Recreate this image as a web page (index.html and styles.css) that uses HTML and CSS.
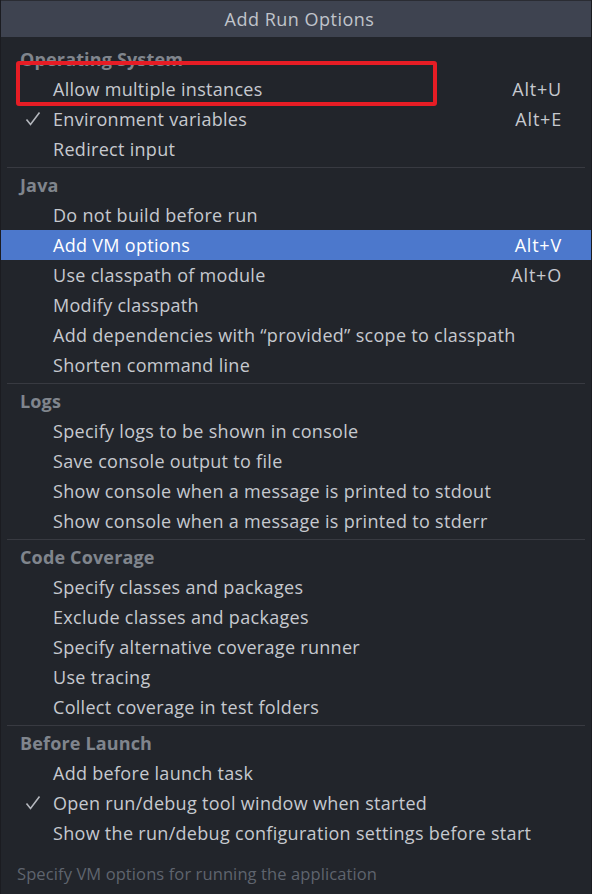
FILE: index.html
```html
<!DOCTYPE html>
<html>
<head>
<meta charset="utf-8">
<link rel="stylesheet" href="styles.css">
</head>
<body>
<div class="popup">
  <div class="title">Add Run Options</div>
  <div class="list">
    <div class="sec-head">Operating System</div>
    <div class="item"><span class="check"></span><span class="label">Allow multiple instances</span><span class="key">Alt+U</span></div>
    <div class="item"><span class="check"><svg viewBox="0 0 16 16" width="16" height="16"><polyline points="1.5,8.5 5.5,13.5 14.5,1.5" fill="none" stroke="#b4b7bd" stroke-width="1.6"/></svg></span><span class="label">Environment variables</span><span class="key">Alt+E</span></div>
    <div class="item"><span class="check"></span><span class="label">Redirect input</span></div>
    <div class="sep"></div>
    <div class="sec-head">Java</div>
    <div class="item"><span class="check"></span><span class="label">Do not build before run</span></div>
    <div class="item selected"><span class="check"></span><span class="label">Add VM options</span><span class="key">Alt+V</span></div>
    <div class="item"><span class="check"></span><span class="label">Use classpath of module</span><span class="key">Alt+O</span></div>
    <div class="item"><span class="check"></span><span class="label">Modify classpath</span></div>
    <div class="item"><span class="check"></span><span class="label">Add dependencies with “provided” scope to classpath</span></div>
    <div class="item"><span class="check"></span><span class="label">Shorten command line</span></div>
    <div class="sep"></div>
    <div class="sec-head">Logs</div>
    <div class="item"><span class="check"></span><span class="label">Specify logs to be shown in console</span></div>
    <div class="item"><span class="check"></span><span class="label">Save console output to file</span></div>
    <div class="item"><span class="check"></span><span class="label">Show console when a message is printed to stdout</span></div>
    <div class="item"><span class="check"></span><span class="label">Show console when a message is printed to stderr</span></div>
    <div class="sep"></div>
    <div class="sec-head">Code Coverage</div>
    <div class="item"><span class="check"></span><span class="label">Specify classes and packages</span></div>
    <div class="item"><span class="check"></span><span class="label">Exclude classes and packages</span></div>
    <div class="item"><span class="check"></span><span class="label">Specify alternative coverage runner</span></div>
    <div class="item"><span class="check"></span><span class="label">Use tracing</span></div>
    <div class="item"><span class="check"></span><span class="label">Collect coverage in test folders</span></div>
    <div class="sep"></div>
    <div class="sec-head">Before Launch</div>
    <div class="item"><span class="check"></span><span class="label">Add before launch task</span></div>
    <div class="item"><span class="check"><svg viewBox="0 0 16 16" width="16" height="16"><polyline points="1.5,8.5 5.5,13.5 14.5,1.5" fill="none" stroke="#b4b7bd" stroke-width="1.6"/></svg></span><span class="label">Open run/debug tool window when started</span></div>
    <div class="item"><span class="check"></span><span class="label">Show the run/debug configuration settings before start</span></div>
  </div>
  <div class="footer">Specify VM options for running the application</div>
  <div class="highlight-box"></div>
</div>
</body>
</html>
```
FILE: styles.css
```css
html, body {
  margin: 0;
  padding: 0;
  background: #22252b;
}
.popup {
  position: relative;
  width: 592px;
  height: 894px;
  box-sizing: border-box;
  border-left: 1px solid #1b1c21;
  border-right: 1px solid #1b1c21;
  background: #22252b;
  font-family: "Open Sans", "Noto Sans", sans-serif;
  color: #c6c9cf;
  overflow: hidden;
}
.title {
  height: 37px;
  line-height: 37px;
  padding-left: 7px;
  background: #3e4350;
  text-align: center;
  font-size: 18px;
  letter-spacing: 0.5px;
  color: #c0c4cb;
  box-sizing: border-box;
  border-top: 1px solid #2a2c33;
}
.list {
  padding-top: 7px;
}
.sec-head {
  height: 30px;
  line-height: 30px;
  padding-left: 19px;
  font-size: 18px;
  letter-spacing: 0.15px;
  font-weight: 700;
  color: #80858d;
}
.item {
  display: flex;
  align-items: center;
  height: 30px;
  font-size: 18px;
  letter-spacing: 0.3px;
  padding-right: 29px;
}
.item.selected {
  background: #4c78cc;
  color: #ffffff;
}
.check {
  width: 52px;
  display: flex;
  justify-content: flex-start;
  padding-left: 24px;
  box-sizing: border-box;
  align-items: center;
}
.check svg {
  display: block;
}
.label {
  flex: 1;
  white-space: nowrap;
}
.key {
  white-space: nowrap;
  letter-spacing: 0.8px;
}
.sep {
  height: 1px;
  background: #383a41;
  margin: 3px 6px 2px 6px;
}
.footer {
  padding-top: 15px;
  padding-left: 16px;
  font-size: 16.5px;
  letter-spacing: 0.1px;
  line-height: 22px;
  color: #5f646e;
}
.highlight-box {
  position: absolute;
  left: 15px;
  top: 61px;
  width: 421px;
  height: 45px;
  box-sizing: border-box;
  border: 4.5px solid #e61d25;
  border-radius: 3px;
}
```
